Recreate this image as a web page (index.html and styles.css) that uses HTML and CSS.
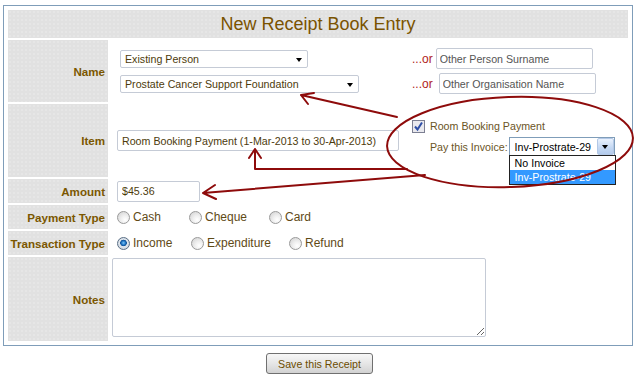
FILE: index.html
```html
<!DOCTYPE html>
<html lang="en">
<head>
    <meta charset="UTF-8">
    <meta name="viewport" content="width=device-width, initial-scale=1.0">
    <title>New Receipt Book Entry</title>
    <link rel="stylesheet" href="styles.css">
</head>
<body>
    <form class="receipt-form" id="receiptForm">
        <div class="receipt-table">
            <div class="table-title">New Receipt Book Entry</div>

            <div class="field-label">Name</div>
            <div class="field-value name-lines">
                <span class="select-wrap">
                    <select class="person-select" name="person">
                        <option>Existing Person</option>
                    </select>
                </span>
                <span class="or-text">...or</span>
                <input type="text" class="text-input muted other-input" value="Other Person Surname">

                <span class="select-wrap">
                    <select class="org-select" name="organisation">
                        <option>Prostate Cancer Support Foundation</option>
                    </select>
                </span>
                <span class="or-text">...or</span>
                <input type="text" class="text-input muted other-input shifted" value="Other Organisation Name">
            </div>

            <div class="field-label">Item</div>
            <div class="field-value item-value">
                <input type="text" class="text-input item-input" value="Room Booking Payment (1-Mar-2013 to 30-Apr-2013)">
                <div class="item-extra">
                    <label class="check-line">
                        <span class="checkbox">
                            <svg width="13" height="13" viewBox="0 0 13 13">
                                <rect x="0.5" y="0.5" width="12" height="12" fill="#e9e9ee" stroke="#7c7f92"/>
                                <path d="M3 6.5 L5.5 9.5 L10 2.5" fill="none" stroke="#2f4fa6" stroke-width="2"/>
                            </svg>
                        </span>
                        Room Booking Payment
                    </label>
                    <div class="invoice-line">
                        Pay this Invoice:
                        <span class="invoice-select">
                            Inv-Prostrate-29
                            <span class="invoice-btn"></span>
                            <ul class="invoice-list">
                                <li>No Invoice</li>
                                <li class="selected">Inv-Prostrate-29</li>
                            </ul>
                        </span>
                    </div>
                </div>
            </div>

            <div class="field-label">Amount</div>
            <div class="field-value">
                <input type="text" class="text-input amount-input" value="$45.36">
            </div>

            <div class="field-label">Payment Type</div>
            <div class="field-value radio-row payment-options">
                <label class="radio-option"><input type="radio" name="payment"> Cash</label>
                <label class="radio-option"><input type="radio" name="payment"> Cheque</label>
                <label class="radio-option"><input type="radio" name="payment"> Card</label>
            </div>

            <div class="field-label">Transaction Type</div>
            <div class="field-value radio-row transaction-options">
                <label class="radio-option"><input type="radio" name="transaction" checked> Income</label>
                <label class="radio-option"><input type="radio" name="transaction"> Expenditure</label>
                <label class="radio-option"><input type="radio" name="transaction"> Refund</label>
            </div>

            <div class="field-label">Notes</div>
            <div class="field-value notes-value">
                <textarea class="notes-input" name="notes"></textarea>
            </div>
        </div>

        <div class="form-actions">
            <button type="submit" class="save-button">Save this Receipt</button>
        </div>
    </form>

    <!-- hand-drawn callout over the form -->
    <svg class="annotations" width="637" height="376" viewBox="0 0 637 376">
        <g fill="none" stroke="#8e0b0b" stroke-width="2" stroke-linecap="round" stroke-linejoin="round">
            <ellipse cx="510" cy="142" rx="123" ry="45" transform="rotate(-2 510 142)"/>
            <path d="M397 117 L301 95 M301 95 L314 93 M301 95 L308 104"/>
            <path d="M407 169 H255 V150 M255 149 L249 158 M255 149 L261 158"/>
            <path d="M425 175 L203 193 M203 193 L215 185 M203 193 L216 199"/>
        </g>
    </svg>
</body>
</html>
```

FILE: styles.css
```css
* {
    box-sizing: border-box;
}

body {
    margin: 0;
    position: relative;
    font-family: 'Liberation Sans', Arial, sans-serif;
    font-size: 12px;
    color: #5f4a16;
    background: #fff;
}

.receipt-form {
    width: 633px;
    padding: 5px 0 0 3px;
}

.receipt-table {
    width: 630px;
    border: 1px solid #7f9db9;
    padding: 4px;
    display: grid;
    grid-template-columns: 100px 1fr;
    grid-template-rows: 28px 62px 73px 24px 24px 24px 84px;
    gap: 2px;
}

.table-title,
.field-label {
    background-color: #e1e1e1;
    background-image: radial-gradient(rgba(255, 255, 255, 0.25) 0.6px, transparent 0.9px);
    background-size: 4px 4px;
}

.table-title {
    grid-column: 1 / -1;
    text-align: center;
    font-size: 18px;
    line-height: 28px;
    color: #7a5300;
}

.field-label {
    display: flex;
    align-items: center;
    justify-content: flex-end;
    padding-right: 3px;
    font-size: 11.6px;
    font-weight: bold;
    color: #7b5700;
    white-space: nowrap;
}

.field-value {
    display: flex;
    align-items: center;
    padding-left: 7px;
}

/* inputs */

.text-input,
.select-wrap select,
.notes-input {
    font-family: 'Liberation Sans', Arial, sans-serif;
    font-size: 10.67px;
    color: #4d3b0c;
    background: #fff;
    border: 1px solid #c5cbd6;
    border-radius: 2px;
    outline: none;
}

.text-input {
    height: 21px;
    padding: 0 4px;
}

.text-input.muted {
    color: #555;
    padding: 0 3px;
}

.select-wrap {
    position: relative;
    display: inline-block;
    justify-self: start;
    line-height: 0;
}

.select-wrap select {
    -webkit-appearance: none;
    appearance: none;
    height: 18px;
    padding: 0 4px;
    margin: 0;
}

.select-wrap::after {
    content: '';
    position: absolute;
    right: 6px;
    top: 8px;
    border-left: 3.5px solid transparent;
    border-right: 3.5px solid transparent;
    border-top: 4px solid #000;
}

.person-select {
    width: 188px;
}

.org-select {
    width: 239px;
}

/* name row */

.name-lines {
    display: grid;
    grid-template-columns: 289px auto auto;
    column-gap: 3px;
    row-gap: 4px;
    align-content: center;
    justify-content: start;
    padding-left: 10px;
}

.or-text {
    font-size: 12px;
    color: #b01c1c;
}

.other-input {
    width: 157px;
}

.other-input.shifted {
    margin-left: 3px;
}

/* item row */

.item-input {
    width: 282px;
}

.item-extra {
    margin-left: 13px;
    margin-bottom: 6px;
    font-size: 10.67px;
    color: #6b5526;
}

.check-line {
    display: flex;
    align-items: center;
    gap: 5px;
    height: 14px;
    margin-bottom: 4px;
}

.checkbox {
    display: block;
    width: 13px;
    height: 13px;
}

.checkbox svg {
    display: block;
}

.invoice-line {
    display: flex;
    align-items: center;
    gap: 1px;
    padding-left: 18px;
}

.invoice-select {
    position: relative;
    display: inline-flex;
    align-items: center;
    width: 106px;
    height: 19px;
    padding-left: 5px;
    border: 1px solid #7f9db9;
    background: #fff;
    color: #000;
}

.invoice-btn {
    position: relative;
    margin-left: auto;
    width: 17px;
    height: 17px;
    border: 1px solid #b3c8e6;
    border-radius: 2px;
    background: linear-gradient(#eaf2fd, #c6d9f3 55%, #b3cbec);
}

.invoice-btn::after {
    content: '';
    position: absolute;
    left: 4px;
    top: 6px;
    border-left: 3.5px solid transparent;
    border-right: 3.5px solid transparent;
    border-top: 4px solid #000;
}

.invoice-list {
    position: absolute;
    top: 100%;
    left: -1px;
    width: 107px;
    margin: 0;
    padding: 0;
    list-style: none;
    background: #fff;
    border: 1px solid #222;
    z-index: 2;
}

.invoice-list li {
    height: 14px;
    line-height: 14px;
    padding-left: 5px;
    color: #000;
}

.invoice-list li.selected {
    background: #3399ff;
    color: #fff;
}

/* amount */

.amount-input {
    width: 83px;
}

/* radios */

.radio-row {
    display: grid;
    justify-content: start;
    align-items: center;
}

.payment-options {
    grid-template-columns: 72px 80px auto;
}

.transaction-options {
    grid-template-columns: 74px 98px auto;
}

.radio-option {
    display: flex;
    align-items: center;
    gap: 3px;
    color: #5f4a16;
}

.radio-option input {
    -webkit-appearance: none;
    appearance: none;
    width: 13px;
    height: 13px;
    margin: 0;
    border: 1px solid #9a9a9a;
    border-radius: 50%;
    background: radial-gradient(circle at 65% 70%, #fff 0, #f1f1f1 35%, #cfcfcf 100%);
}

.radio-option input:checked {
    border-color: #5a6f86;
    background: radial-gradient(circle at 50% 45%, #7fc4f5 0, #2f86d2 1.6px, #0c4f96 3px, #dfe6ee 3.6px, #c8ced6 100%);
}

/* notes */

.notes-value {
    align-items: flex-start;
    padding-left: 2px;
}

.notes-input {
    width: 374px;
    height: 79px;
    margin-top: 1px;
}

/* actions */

.form-actions {
    text-align: center;
    padding: 7px 0 0 3px;
}

.save-button {
    width: 107px;
    height: 21px;
    padding: 0;
    border: 1px solid #707070;
    border-radius: 3px;
    background: linear-gradient(#f7f7f7, #e6e6e6 50%, #d2d2d2);
    font-family: 'Liberation Sans', Arial, sans-serif;
    font-size: 10.67px;
    color: #6b4c00;
}

.annotations {
    position: absolute;
    top: 0;
    left: 0;
    pointer-events: none;
    z-index: 5;
}
```
